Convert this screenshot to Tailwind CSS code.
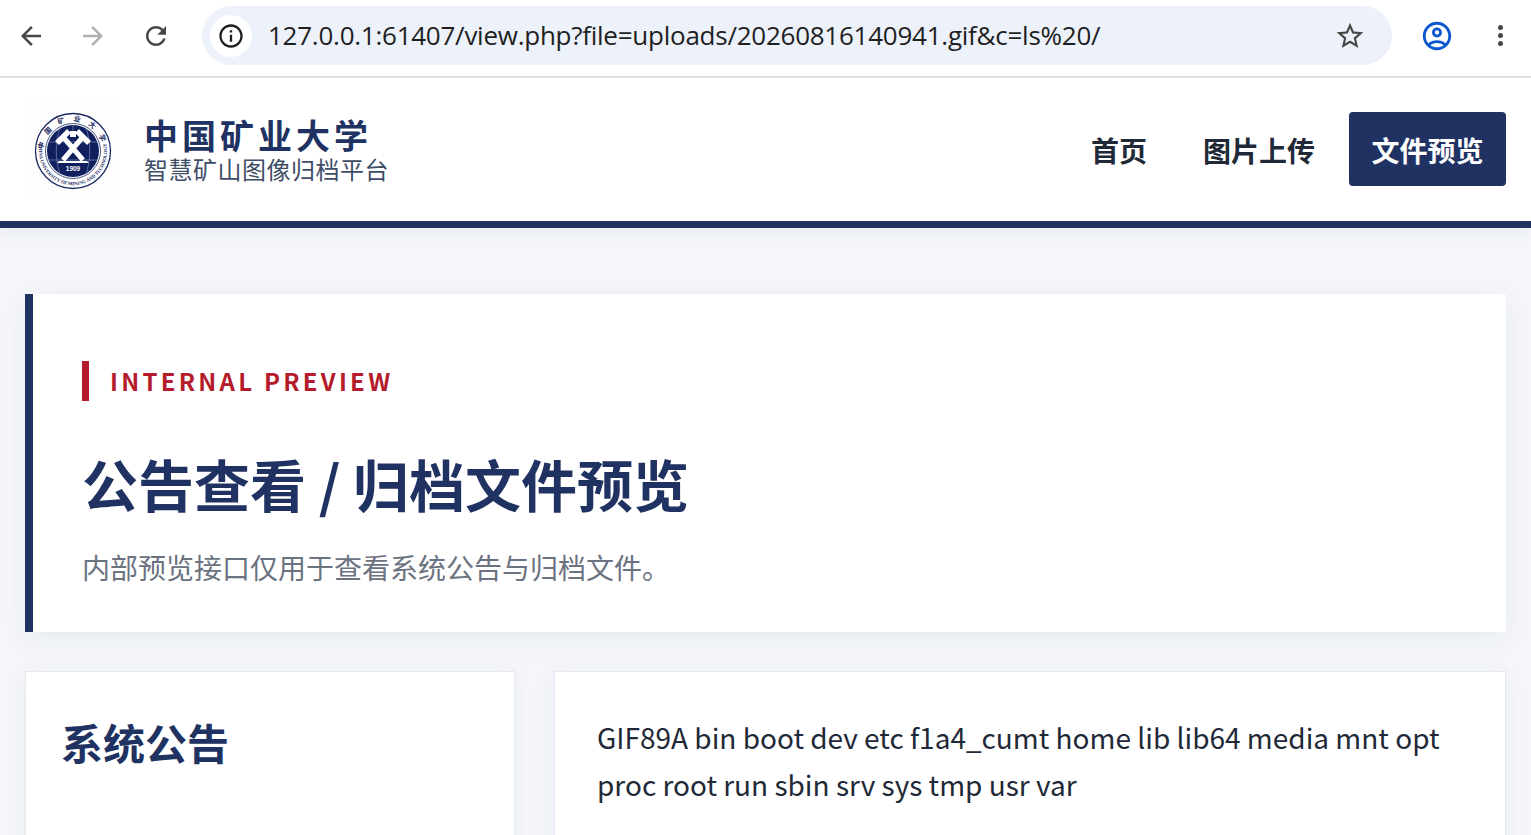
<!DOCTYPE html>
<html lang="zh-CN">
<head>
  <meta charset="UTF-8" />
  <meta name="viewport" content="width=device-width, initial-scale=1.0" />
  <title>文件预览</title>
  <script src="https://cdn.jsdelivr.net/npm/@tailwindcss/browser@4"></script>
</head>
<body class="h-[835px] overflow-hidden bg-[#f4f6fa] font-['Noto_Sans_CJK_SC',sans-serif]">

  <!-- Browser toolbar -->
  <div class="h-[78px] pb-[5px] bg-white border-b-2 border-[#e3e3e3] flex items-center">
    <svg class="w-[30px] h-[30px] ml-4 fill-[#474747]" viewBox="0 0 24 24"><path d="M20 11H7.83l5.59-5.59L12 4l-8 8 8 8 1.41-1.41L7.83 13H20v-2z"/></svg>
    <svg class="w-[30px] h-[30px] ml-[32px] fill-[#b0b0b0]" viewBox="0 0 24 24"><path d="M12 4l-1.41 1.41L16.17 11H4v2h12.17l-5.58 5.59L12 20l8-8z"/></svg>
    <svg class="w-[30px] h-[30px] ml-[33px] fill-[#474747]" viewBox="0 0 24 24"><path d="M17.65 6.35C16.2 4.9 14.21 4 12 4c-4.42 0-7.99 3.58-7.99 8s3.57 8 7.99 8c3.73 0 6.84-2.55 7.73-6h-2.08c-.82 2.33-3.04 4-5.65 4-3.31 0-6-2.69-6-6s2.69-6 6-6c1.66 0 3.14.69 4.22 1.78L13 11h7V4l-2.35 2.35z"/></svg>
    <div class="ml-[31px] w-[1190px] h-[59px] rounded-full bg-[#ecf1fa] flex items-center pl-2 pr-[26px]">
      <div class="w-[42px] h-[42px] rounded-full bg-white flex items-center justify-center">
        <svg class="w-7 h-7 fill-[#1f1f1f]" viewBox="0 0 24 24"><path d="M11 7h2v2h-2zm0 4h2v6h-2zm1-9C6.48 2 2 6.48 2 12s4.48 10 10 10 10-4.48 10-10S17.52 2 12 2zm0 18c-4.41 0-8-3.59-8-8s3.59-8 8-8 8 3.59 8 8-3.59 8-8 8z"/></svg>
      </div>
      <span class="ml-[16px] flex-1 text-[26px] tracking-[-0.25px] text-[#1f1f1f] font-['Open_Sans',sans-serif]">127.0.0.1:61407/view.php?file=uploads/20260816140941.gif&amp;c=ls%20/</span>
      <svg class="w-8 h-8 fill-[#474747]" viewBox="0 0 24 24"><path d="M22 9.24l-7.19-.62L12 2 9.19 8.63 2 9.24l5.46 4.73L5.82 21 12 17.27 18.18 21l-1.63-7.03L22 9.24zM12 15.4l-3.76 2.27 1-4.28-3.32-2.88 4.38-.38L12 6.1l1.71 4.04 4.38.38-3.32 2.88 1 4.28L12 15.4z"/></svg>
    </div>
    <svg class="w-[34px] h-[34px] ml-[28px] fill-[#0b57d0]" viewBox="0 0 24 24"><path d="M12 2C6.48 2 2 6.48 2 12s4.48 10 10 10 10-4.48 10-10S17.52 2 12 2zM7.35 18.5C8.66 17.56 10.26 17 12 17s3.34.56 4.65 1.5C15.34 19.44 13.74 20 12 20s-3.34-.56-4.65-1.5zm10.79-1.38C16.45 15.8 14.32 15 12 15s-4.45.8-6.14 2.12C4.7 15.73 4 13.95 4 12c0-4.42 3.58-8 8-8s8 3.58 8 8c0 1.95-.7 3.73-1.86 5.12z"/><path d="M12 6c-1.93 0-3.5 1.57-3.5 3.5S10.07 13 12 13s3.5-1.57 3.5-3.5S13.93 6 12 6zm0 5c-.83 0-1.5-.67-1.5-1.5S11.17 8 12 8s1.5.67 1.5 1.5S12.83 11 12 11z"/></svg>
    <div class="ml-[44px] flex flex-col gap-[3px]">
      <span class="w-[5px] h-[5px] rounded-full bg-[#474747]"></span>
      <span class="w-[5px] h-[5px] rounded-full bg-[#474747]"></span>
      <span class="w-[5px] h-[5px] rounded-full bg-[#474747]"></span>
    </div>
  </div>

  <!-- Site header -->
  <header class="h-[150px] pb-[1px] bg-white border-b-[7px] border-[#203262] shadow-[0_4px_14px_rgba(32,50,98,0.06)] flex items-center justify-between pl-[25px] pr-[25px]">
    <div class="flex items-center">
      <div class="w-[95px] h-[92px] bg-[#fdfdfd] flex items-center justify-center">
        <svg class="w-[78px] h-[78px] mt-[3px]" viewBox="0 0 78 78">
          <defs>
            <path id="ringTop" d="M9.5 39a29.5 29.5 0 0 1 59 0" />
            <path id="ringBottom" d="M6 31a34 34 0 1 0 66 0" />
          </defs>
          <circle cx="39" cy="39" r="37.5" fill="#fff" stroke="#1b2a63" stroke-width="1.3" />
          <circle cx="39" cy="39" r="26" fill="#10205f" />
          <circle cx="39" cy="39" r="27.5" fill="none" stroke="#1b2a63" stroke-width="0.8" />
          <path d="M14 30h50M13 48h52M39 13v10M26 16c-5 14-5 32 0 46M52 16c5 14 5 32 0 46" fill="none" stroke="#8f9ac0" stroke-width="0.6" />
          <text font-family="Noto Sans CJK SC" font-size="7" font-weight="700" fill="#1b2a63"><textPath href="#ringTop" startOffset="50%" text-anchor="middle" letter-spacing="8">中国矿业大学</textPath></text>
          <text font-family="Liberation Serif" font-size="4.8" font-weight="700" fill="#1b2a63"><textPath href="#ringBottom" startOffset="50%" text-anchor="middle">CHINA UNIVERSITY OF MINING AND TECHNOLOGY</textPath></text>
          <!-- crossed hammers -->
          <path d="M30 26L49 48M48 26L29 48" fill="none" stroke="#fff" stroke-width="5" />
          <path d="M35 19L23 31M43 19L55 31" fill="none" stroke="#fff" stroke-width="5.5" />
          <path d="M36 19h6v6h-6z" fill="#fff" />
          <path d="M25 49h28l2 2H23z" fill="#fff" />
          <text x="39" y="59" font-family="Liberation Sans" font-size="6.5" font-weight="700" fill="#fff" text-anchor="middle">1909</text>
        </svg>
      </div>
      <div class="ml-[24px] mt-[2px] flex flex-col">
        <span class="text-[34px] leading-[38px] font-bold tracking-[4px] text-[#203262]">中国矿业大学</span>
        <span class="text-[24px] leading-[30px] tracking-[0.5px] text-[#3e4d66]">智慧矿山图像归档平台</span>
      </div>
    </div>
    <nav class="flex items-center text-[28px] font-bold text-[#1f2937]">
      <a href="#" class="mr-[56px] mt-[2px]">首页</a>
      <a href="#" class="mr-[34px] mt-[2px]">图片上传</a>
      <a href="#" class="w-[157px] h-[74px] pt-[2px] rounded-[4px] bg-[#203262] text-white flex items-center justify-center">文件预览</a>
    </nav>
  </header>

  <main class="h-[607px] overflow-hidden px-[25px] pt-[66px]">
    <!-- Hero -->
    <section class="h-[338px] bg-white border-l-[8px] border-[#203262] shadow-[0_6px_24px_rgba(32,50,98,0.06)] pl-[49px] pt-[67px]">
      <div class="flex items-center h-[40px] border-l-[7px] border-[#b41c2b] pl-[21px]">
        <span class="text-[24px] font-bold tracking-[3.25px] text-[#b41c2b]">INTERNAL PREVIEW</span>
      </div>
      <h1 class="mt-[42px] text-[56px] leading-[80px] font-bold text-[#203262]">公告查看 / 归档文件预览</h1>
      <p class="mt-[24px] text-[28px] leading-[40px] text-[#6b7280]">内部预览接口仅用于查看系统公告与归档文件。</p>
    </section>

    <!-- Cards -->
    <div class="mt-[39px] grid grid-cols-[490px_952px] gap-[39px]">
      <section class="h-[300px] bg-white border border-[#e5e8ef] shadow-[0_4px_20px_rgba(32,50,98,0.05)] pl-[35px] pt-[40px]">
        <h2 class="text-[42px] leading-[60px] font-bold text-[#203262]">系统公告</h2>
      </section>
      <section class="h-[300px] bg-white border border-[#e5e8ef] shadow-[0_4px_20px_rgba(32,50,98,0.05)] pl-[42px] pr-[42px] pt-[42px]">
        <p class="text-[28px] leading-[46.6px] text-[#1f2937]">GIF89A bin boot dev etc f1a4_cumt home lib lib64 media mnt opt proc root run sbin srv sys tmp usr var</p>
      </section>
    </div>
  </main>
</body>
</html>
